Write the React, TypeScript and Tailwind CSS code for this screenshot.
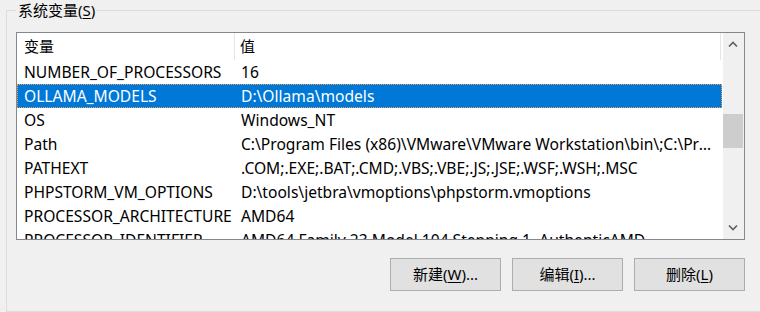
import React from "react";

const rows: [string, string][] = [
  ["NUMBER_OF_PROCESSORS", "16"],
  ["OLLAMA_MODELS", "D:\\Ollama\\models"],
  ["OS", "Windows_NT"],
  ["Path", "C:\\Program Files (x86)\\VMware\\VMware Workstation\\bin\\;C:\\Program Files\\Common Files\\Oracle\\Java\\javapath;C:\\Windows\\system32"],
  ["PATHEXT", ".COM;.EXE;.BAT;.CMD;.VBS;.VBE;.JS;.JSE;.WSF;.WSH;.MSC"],
  ["PHPSTORM_VM_OPTIONS", "D:\\tools\\jetbra\\vmoptions\\phpstorm.vmoptions"],
  ["PROCESSOR_ARCHITECTURE", "AMD64"],
  ["PROCESSOR_IDENTIFIER", "AMD64 Family 23 Model 104 Stepping 1, AuthenticAMD"],
];

const font = { fontFamily: '"Noto Sans", "Noto Sans CJK SC", sans-serif' };

function Chevron({ up }: { up?: boolean }) {
  return (
    <svg width="10" height="6" viewBox="0 0 10 6">
      <polyline
        points={up ? "1,5.5 5,1.5 9,5.5" : "1,0.5 5,4.5 9,0.5"}
        fill="none"
        stroke="#606060"
        strokeWidth="1.6"
      />
    </svg>
  );
}

function Btn({ label, hot, tail }: { label: string; hot: string; tail: string }) {
  return (
    <button className="w-[111px] h-[33px] bg-[#e1e1e1] border border-[#adadad] text-[15px] text-black flex items-center justify-center leading-none">
      <span>
        {label}(<span className="underline underline-offset-2">{hot}</span>){tail}
      </span>
    </button>
  );
}

export default function App() {
  return (
    <div className="w-[760px] h-[312px] overflow-hidden bg-[#f0f0f0] text-black" style={font}>
      <fieldset className="ml-[6px] w-[800px] h-[312px] border border-[#dcdcdc] pl-[9px] pt-[12px] pr-0">
        <legend className="pl-[2px] pr-[1px] h-[20px] text-[15px] leading-[20px]">
          系统变量(<span className="underline underline-offset-2">S</span>)
        </legend>
        <div className="w-[729px] h-[208px] border border-[#828790] bg-white flex">
          <div className="w-[706px] flex flex-col overflow-hidden text-[15.6px]">
            <div className="h-[27px] shrink-0 flex text-[15px]">
              <div className="w-[218px] shrink-0 pl-[7px] flex items-center border-r border-[#e5e5e5]">变量</div>
              <div className="w-[486px] shrink-0 pl-[5px] flex items-center border-r border-[#e5e5e5]">值</div>
            </div>
            {rows.map(([k, v], i) => {
              const sel = i === 1;
              return (
                <div
                  key={k}
                  className={
                    sel
                      ? "h-[24px] w-[705px] shrink-0 flex items-center pt-[2px] bg-[#0078d7] text-white border border-dotted border-[#f0a050]"
                      : "h-[24px] w-[705px] shrink-0 flex items-center pt-[2px] border border-transparent"
                  }
                >
                  <div className="w-[218px] shrink-0 pl-[6px] whitespace-nowrap overflow-hidden">{k}</div>
                  <div className="flex-1 min-w-0 pl-[5px] pr-[8px] whitespace-nowrap overflow-hidden text-ellipsis">{v}</div>
                </div>
              );
            })}
          </div>
          <div className="w-[21px] bg-[#f0f0f0] flex flex-col">
            <div className="h-[22px] flex items-center justify-center pr-[1px]">
              <Chevron up />
            </div>
            <div className="flex-1">
              <div className="mt-[59px] w-[20px] h-[34px] bg-[#cdcdcd]" />
            </div>
            <div className="h-[22px] flex items-center justify-center pr-[1px]">
              <Chevron />
            </div>
          </div>
        </div>
        <div className="w-[729px] mt-[18px] flex justify-end gap-[11px]">
          <Btn label="新建" hot="W" tail="..." />
          <Btn label="编辑" hot="I" tail="..." />
          <Btn label="删除" hot="L" tail="" />
        </div>
      </fieldset>
    </div>
  );
}
